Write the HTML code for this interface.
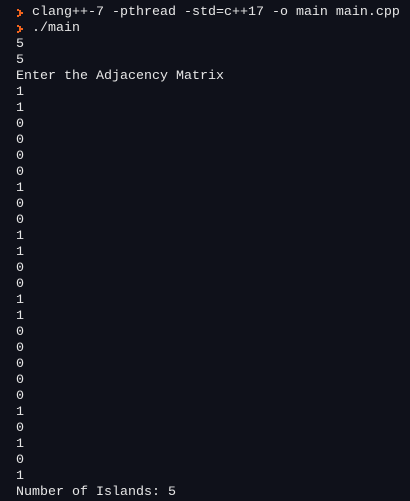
<!DOCTYPE html>
<html><head><style>
html,body{margin:0;padding:0;background:#0f111a;width:410px;height:501px;overflow:hidden}
pre{margin:0;position:absolute;left:16px;top:5px;font-family:"Liberation Mono",monospace;font-size:13.33px;line-height:16px;color:#e6e6e6}
.p{display:inline-block;width:16px;position:relative;height:16px;vertical-align:top}
.p svg{position:absolute;left:1px;top:4px}
</style></head><body>
<pre><span class="p"><svg width="6" height="8" viewBox="0 0 6 8"><path d="M0 0h2v1h2v2h2v2h-2v2h-2v1h-2v-2h2v-4h-2z" fill="#f0641e"/></svg></span>clang++-7 -pthread -std=c++17 -o main main.cpp
<span class="p"><svg width="6" height="8" viewBox="0 0 6 8"><path d="M0 0h2v1h2v2h2v2h-2v2h-2v1h-2v-2h2v-4h-2z" fill="#f0641e"/></svg></span>./main
5
5
Enter the Adjacency Matrix
1
1
0
0
0
0
1
0
0
1
1
0
0
1
1
0
0
0
0
0
1
0
1
0
1
Number of Islands: 5</pre>
</body></html>
